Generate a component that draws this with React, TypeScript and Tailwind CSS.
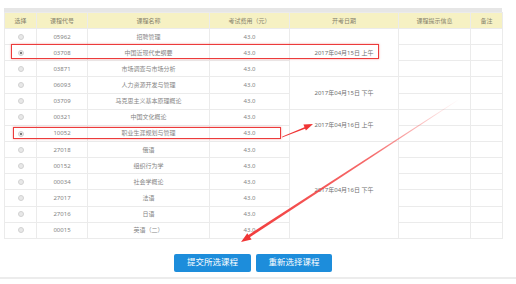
import React from "react"

const courses = [
  { code: "05962", name: "招聘管理" },
  { code: "03708", name: "中国近现代史纲要", checked: true },
  { code: "03871", name: "市场调查与市场分析" },
  { code: "06093", name: "人力资源开发与管理" },
  { code: "03709", name: "马克思主义基本原理概论" },
  { code: "00321", name: "中国文化概论" },
  { code: "10052", name: "职业生涯规划与管理", checked: true },
  { code: "27018", name: "俄语" },
  { code: "00152", name: "组织行为学" },
  { code: "00034", name: "社会学概论" },
  { code: "27017", name: "法语" },
  { code: "27016", name: "日语" },
  { code: "00015", name: "英语（二）" },
]

// start row -> [rowSpan, label]
const dates: Record<number, [number, string]> = {
  0: [3, "2017年04月15日 上午"],
  3: [2, "2017年04月15日 下午"],
  5: [2, "2017年04月16日 上午"],
  7: [6, "2017年04月16日 下午"],
}

function Radio({ checked }: { checked?: boolean }) {
  return (
    <span className="inline-flex h-[6px] w-[6px] items-center justify-center rounded-full border border-[#d2d2d2] bg-[#e8e8e8] align-middle">
      {checked && <span className="h-[2px] w-[2px] rounded-full bg-[#555]" />}
    </span>
  )
}

const cell = "border border-[#ebebeb] p-0 text-center align-middle"

export default function App() {
  return (
    <div
      className="relative h-[284px] w-[516px] overflow-hidden bg-white text-[#858585]"
      style={{ fontFamily: '"Noto Sans", "Noto Sans CJK SC", sans-serif' }}
    >
      <div className="ml-[4px] w-[498px] pt-[8px]">
        <div className="h-[4px] bg-[#e6e6e6]" />
        <table className="w-full table-fixed border-collapse text-[6px] leading-none">
          <colgroup>
            <col className="w-[32px]" />
            <col className="w-[51px]" />
            <col className="w-[122px]" />
            <col className="w-[80px]" />
            <col className="w-[109px]" />
            <col className="w-[72px]" />
            <col className="w-[32px]" />
          </colgroup>
          <thead>
            <tr className="h-[16px] bg-[#f6f1c3] text-[#86826c]">
              <th className={cell + " font-normal"}>选择</th>
              <th className={cell + " font-normal"}>课程代号</th>
              <th className={cell + " font-normal"}>课程名称</th>
              <th className={cell + " font-normal"}>考试费用（元）</th>
              <th className={cell + " font-normal"}>开考日期</th>
              <th className={cell + " font-normal"}>课程提示信息</th>
              <th className={cell + " font-normal"}>备注</th>
            </tr>
          </thead>
          <tbody>
            {courses.map((c, i) => (
              <tr key={c.code} className="h-[16.15px]">
                <td className={cell}>
                  <Radio checked={c.checked} />
                </td>
                <td className={cell}>{c.code}</td>
                <td className={cell}>{c.name}</td>
                <td className={cell}>43.0</td>
                {dates[i] && (
                  <td className={cell + " text-[#707070]"} rowSpan={dates[i][0]}>
                    {dates[i][1]}
                  </td>
                )}
                <td className={cell} />
                <td className={cell} />
              </tr>
            ))}
          </tbody>
        </table>
        <div className="mt-[15px] flex justify-center gap-[5px] text-[8.5px] text-white">
          <button className="h-[18px] w-[77px] rounded-[2px] bg-[#1d8ddb]">提交所选课程</button>
          <button className="h-[18px] w-[76px] rounded-[2px] bg-[#1d8ddb]">重新选择课程</button>
        </div>
      </div>
      <div className="mt-[5px] h-[2px] w-full bg-[#ececec]" />

      {/* highlight boxes */}
      <div className="absolute left-[11px] top-[44px] h-[15px] w-[368px] border-[1.5px] border-[#ec3b3b] shadow-[0_0_2px_rgba(236,59,59,0.5)]" />
      <div className="absolute left-[13px] top-[127px] h-[12px] w-[268px] border-[1.5px] border-[#ec3b3b] shadow-[0_0_2px_rgba(236,59,59,0.5)]" />

      {/* arrows */}
      <svg className="pointer-events-none absolute left-0 top-0" width="516" height="284">
        <defs>
          <linearGradient id="fade" x1="459" y1="99" x2="241" y2="242" gradientUnits="userSpaceOnUse">
            <stop offset="0" stopColor="#f23a3a" stopOpacity="0" />
            <stop offset="0.4" stopColor="#f23a3a" stopOpacity="0.75" />
            <stop offset="1" stopColor="#f23a3a" />
          </linearGradient>
        </defs>
        <polygon points="282,137.6 282.4,136.4 305,127 305.6,128.6" fill="#f03535" />
        <polygon points="313,124 305.9,130.6 303.4,124.4" fill="#f03535" />
        <polygon points="459,99 459.4,99.6 249,237.8 247.6,235.4" fill="url(#fade)" />
        <polygon points="241,242 251.6,239.6 247.3,233.2" fill="#f03535" />
      </svg>
    </div>
  )
}
